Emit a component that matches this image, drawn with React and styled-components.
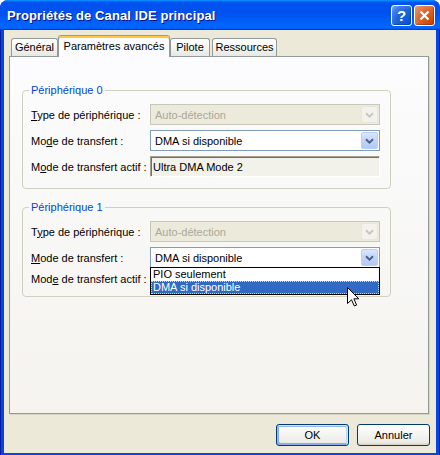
import React from 'react';
import styled, { createGlobalStyle } from 'styled-components';

const GlobalStyle = createGlobalStyle`
  html, body {
    margin: 0;
    padding: 0;
    background: #ffffff;
  }
  body {
    font-family: "Liberation Sans", Arial, sans-serif;
    font-size: 11px;
    color: #000;
  }
`;

const Window = styled.div`
  width: 440px;
  height: 455px;
  display: flex;
  flex-direction: column;
  background: #0845e0;
  border-radius: 8px 8px 0 0;
  overflow: hidden;
`;

const TitleBar = styled.div`
  height: 30px;
  flex: none;
  display: flex;
  align-items: center;
  padding: 0 5px 0 7px;
  background: linear-gradient(180deg, #0997ff, #0053ee 8%, #0050ee 40%, #0066ff 88%, #0066ff 93%, #005bff 95%, #003dd7 96%, #003dd7);
`;

const Title = styled.div`
  flex: 1;
  color: #fff;
  font-weight: bold;
  font-size: 13px;
  letter-spacing: 0.1px;
  text-shadow: 1px 1px #0f1089;
`;

const TitleButton = styled.div`
  width: 21px;
  height: 21px;
  box-sizing: border-box;
  margin-left: 2px;
  border: 1px solid #fff;
  border-radius: 3px;
  display: flex;
  align-items: center;
  justify-content: center;
  color: #fff;
  font-weight: bold;
  font-size: 15px;
  background: ${p => (p.$close
    ? 'radial-gradient(circle at 90% 90%, #cc4600 0%, #dc6527 55%, #e28357 80%, #e9a07a 100%)'
    : 'radial-gradient(circle at 90% 90%, #0054e9 0%, #2263d5 55%, #4480ec 80%, #8ab0f5 100%)')};
  box-shadow: inset -1px -1px 1px rgba(0, 0, 0, 0.25);
`;

const Frame = styled.div`
  flex: 1;
  display: flex;
  padding: 0 4px 4px;
  box-shadow: inset 1px 0 #001ea0, inset -1px 0 #001ea0, inset 0 -1px #001ea0;
`;

const Body = styled.div`
  flex: 1;
  display: flex;
  flex-direction: column;
  background: #ece9d8;
  padding: 5px 7px 7px 5px;
`;

const TabRow = styled.div`
  display: flex;
  align-items: flex-end;
  height: 22px;
  padding-left: 2px;
  margin-bottom: -1px;
  position: relative;
  z-index: 1;
`;

const Tab = styled.div`
  width: ${p => p.$w}px;
  box-sizing: border-box;
  margin-left: ${p => p.$ml || 0}px;
  height: ${p => (p.$active ? 22 : 18)}px;
  margin-bottom: ${p => (p.$active ? 0 : 1)}px;
  border: 1px solid #919b9c;
  border-bottom: none;
  border-radius: 3px 3px 0 0;
  text-align: center;
  line-height: ${p => (p.$active ? 17 : 16)}px;
  background: ${p => (p.$active ? '#fcfcfe' : 'linear-gradient(180deg, #ffffff, #f3f3ef 60%, #e8e7e0)')};
  ${p => p.$active && `
    border-top: 1px solid #e68b2c;
    box-shadow: inset 0 2px #ffc83c;
    padding-top: 2px;
  `}
`;

const Panel = styled.div`
  height: 358px;
  box-sizing: border-box;
  border: 1px solid #919b9c;
  background: linear-gradient(180deg, #fcfcfe, #f4f3ee);
  box-shadow: 1px 1px 0 #d6d3c7;
  padding: 27px 0 0 12px;
`;

const Group = styled.fieldset`
  width: 369px;
  box-sizing: border-box;
  margin: ${p => (p.$first ? 0 : '12px 0 0 0')};
  padding: 7px 8px 11px 8px;
  border: 1px solid #d0d0bf;
  border-radius: 4px;
  min-width: 0;
`;

const Legend = styled.legend`
  color: #0046d5;
  padding: 0 2px;
  margin-left: -2px;
  line-height: 13px;
`;

const Rows = styled.div`
  display: grid;
  grid-template-columns: 119px 230px;
  row-gap: 5px;
  align-items: center;
`;

const Label = styled.div`
  white-space: nowrap;
`;

const Combo = styled.div`
  position: relative;
  height: 21px;
  box-sizing: border-box;
  display: flex;
  align-items: center;
  padding-left: 4px;
  border: 1px solid ${p => (p.$disabled ? '#c9c7ba' : '#7f9db9')};
  background: ${p => (p.$disabled ? '#ebeadb' : '#ffffff')};
  color: ${p => (p.$disabled ? '#aca899' : '#000')};
`;

const DropButton = styled.div`
  margin-left: auto;
  margin-right: 1px;
  width: 17px;
  height: 17px;
  box-sizing: border-box;
  border-radius: 2px;
  display: flex;
  align-items: center;
  justify-content: center;
  border: 1px solid ${p => (p.$disabled ? '#e8e6da' : '#bacff7')};
  background: ${p => (p.$disabled
    ? '#f3f2ec'
    : 'linear-gradient(180deg, #dbe6fe 0%, #c4d5fc 45%, #b4c9f8 100%)')};
`;

const ReadOnly = styled.div`
  height: 21px;
  box-sizing: border-box;
  display: flex;
  align-items: center;
  padding-left: 2px;
  background: #f2f1ea;
  border-top: 1px solid #a6a293;
  border-left: 1px solid #a6a293;
  border-right: 1px solid #ffffff;
  border-bottom: 1px solid #ffffff;
  box-shadow: inset 1px 1px 0 #716f64;
`;

const List = styled.div`
  position: absolute;
  top: 100%;
  left: -1px;
  right: -1px;
  border: 1px solid #000;
  background: #fff;
  z-index: 5;
`;

const Item = styled.div`
  height: 13px;
  line-height: 13px;
  padding-left: 2px;
  color: ${p => (p.$selected ? '#fff' : '#000')};
  background: ${p => (p.$selected ? '#316ac5' : 'transparent')};
  outline: ${p => (p.$selected ? '1px dotted #f4d68c' : 'none')};
  outline-offset: -1px;
`;

const Pointer = styled.svg`
  position: absolute;
  left: 196px;
  top: 19px;
`;

const Footer = styled.div`
  display: flex;
  justify-content: flex-end;
  gap: 8px;
  margin-top: 10px;
  margin-right: -1px;
`;

const Button = styled.div`
  width: 73px;
  height: 22px;
  box-sizing: border-box;
  border: 1px solid #003c74;
  border-radius: 3px;
  display: flex;
  align-items: center;
  justify-content: center;
  background: linear-gradient(180deg, #ffffff, #ecebe6 86%, #d6d0c5);
  ${p => p.$default && `
    box-shadow: inset -1px 1px #cee7ff, inset 1px 2px #98b8ea, inset -2px 2px #bcd4f6, inset 1px -1px #89ade4, inset 2px -2px #89ade4;
  `}
`;

const Chevron = ({ color }) => (
  <svg width="9" height="6" viewBox="0 0 9 6">
    <path d="M1 1.2 L4.5 4.6 L8 1.2" fill="none" stroke={color} strokeWidth="2" />
  </svg>
);

const Select = ({ value, disabled, open }) => (
  <Combo $disabled={disabled}>
    {value}
    <DropButton $disabled={disabled}>
      <Chevron color={disabled ? '#c9c7ba' : '#4d6185'} />
    </DropButton>
    {open && (
      <List>
        <Item>PIO seulement</Item>
        <Item $selected>DMA si disponible</Item>
        <Pointer width="13" height="20" viewBox="0 0 13 20">
          <path d="M0.5 0.5 L0.5 16.5 L4.5 12.8 L7.3 19 L9.6 18 L6.9 11.8 L11.8 11.8 Z" fill="#fff" stroke="#000" strokeWidth="1" />
        </Pointer>
      </List>
    )}
  </Combo>
);

const Device = ({ index, first, keys, open }) => (
  <Group $first={first}>
    <Legend>Périphérique {index}</Legend>
    <Rows>
      <Label>{keys[0]} de périphérique :</Label>
      <Select value="Auto-détection" disabled />
      <Label>{keys[1]} de transfert :</Label>
      <Select value="DMA si disponible" open={open} />
      <Label>{keys[2]} de transfert actif :</Label>
      {open ? <div /> : <ReadOnly>Ultra DMA Mode 2</ReadOnly>}
    </Rows>
  </Group>
);

export default function App() {
  return (
    <>
      <GlobalStyle />
      <Window>
        <TitleBar>
          <Title>Propriétés de Canal IDE principal</Title>
          <TitleButton>?</TitleButton>
          <TitleButton $close>
            <svg width="11" height="11" viewBox="0 0 11 11">
              <path d="M1.5 1.5 L9.5 9.5 M9.5 1.5 L1.5 9.5" stroke="#fff" strokeWidth="2.2" />
            </svg>
          </TitleButton>
        </TitleBar>
        <Frame>
          <Body>
            <TabRow>
              <Tab $w={47}>Général</Tab>
              <Tab $w={112} $active>Paramètres avancés</Tab>
              <Tab $w={40}>Pilote</Tab>
              <Tab $w={65} $ml={2}>Ressources</Tab>
            </TabRow>
            <Panel>
              <Device
                index={0}
                first
                keys={[<><u>T</u>ype</>, <>Mo<u>d</u>e</>, <>M<u>o</u>de</>]}
              />
              <Device
                index={1}
                open
                keys={[<>T<u>y</u>pe</>, <><u>M</u>ode</>, <>Mod<u>e</u></>]}
              />
            </Panel>
            <Footer>
              <Button $default>OK</Button>
              <Button>Annuler</Button>
            </Footer>
          </Body>
        </Frame>
      </Window>
    </>
  );
}
